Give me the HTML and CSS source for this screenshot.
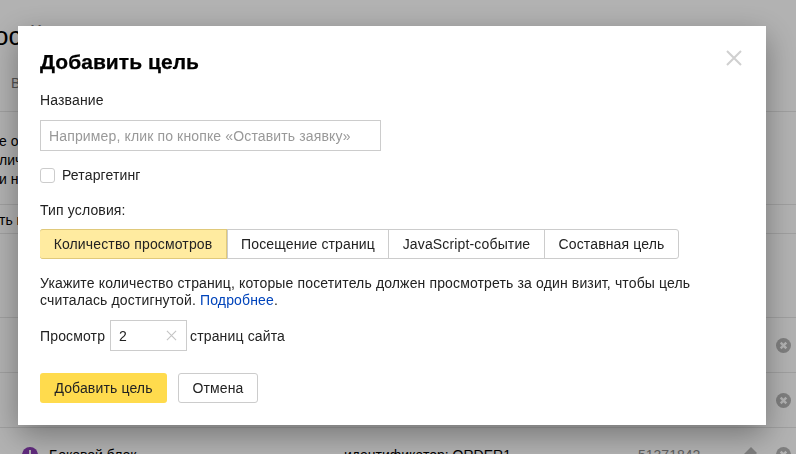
FILE: index.html
```html
<!DOCTYPE html>
<html lang="ru">
<head>
<meta charset="utf-8">
<title>Добавить цель</title>
<link rel="stylesheet" href="styles.css">
</head>
<body>
<div class="page">
  <div class="page-head">
    <div class="page-title">ос й</div>
    <div class="page-tab">В</div>
  </div>
  <div class="page-note">
    <div>е описание</div>
    <div>личество</div>
    <div>и не</div>
  </div>
  <div class="page-action">ть цель</div>
  <div class="page-gap"></div>
  <div class="goal-row"><span class="row-end"><svg class="x-circle" viewBox="0 0 16 16"><circle cx="8" cy="8" r="8"/><path d="M5 5l6 6M11 5l-6 6"/></svg></span></div>
  <div class="goal-row"><span class="row-end"><svg class="x-circle" viewBox="0 0 16 16"><circle cx="8" cy="8" r="8"/><path d="M5 5l6 6M11 5l-6 6"/></svg></span></div>
  <div class="goal-row goal-row-last">
    <svg class="goal-mark" viewBox="0 0 16 16"><circle cx="8" cy="8" r="8"/><rect x="7" y="3" width="2" height="6" fill="#fff"/></svg>
    <span class="goal-name">Боковой блок</span>
    <span class="goal-cond">идентификатор: ORDER1</span>
    <span class="goal-id">51371842</span>
    <svg class="pencil" viewBox="0 0 16 16"><path d="M8 0l6 6-8 8H0V8z"/></svg>
    <svg class="x-circle" viewBox="0 0 16 16"><circle cx="8" cy="8" r="8"/><path d="M5 5l6 6M11 5l-6 6"/></svg>
  </div>
</div>
<div class="overlay">
  <div class="modal">
    <svg class="modal-close" viewBox="0 0 16 16"><path d="M1 1l14 14M15 1L1 15"/></svg>
    <h1 class="modal-title">Добавить цель</h1>
    <div class="label">Название</div>
    <div class="input input-name">Например, клик по кнопке «Оставить заявку»</div>
    <div class="check-row"><span class="checkbox"></span><span>Ретаргетинг</span></div>
    <div class="label label-type">Тип условия:</div>
    <div class="tabs">
      <span class="tab tab-active">Количество просмотров</span>
      <span class="tab">Посещение страниц</span>
      <span class="tab">JavaScript-событие</span>
      <span class="tab">Составная цель</span>
    </div>
    <p class="hint">Укажите количество страниц, которые посетитель должен просмотреть за один визит, чтобы цель считалась достигнутой. <a class="link" href="#">Подробнее</a>.</p>
    <div class="views">
      <span>Просмотр</span>
      <span class="input input-num"><span>2</span><svg class="num-clear" viewBox="0 0 12 12"><path d="M1 1l10 10M11 1L1 11"/></svg></span>
      <span>страниц сайта</span>
    </div>
    <div class="actions">
      <span class="btn btn-primary">Добавить цель</span>
      <span class="btn btn-plain">Отмена</span>
    </div>
  </div>
</div>
</body>
</html>
```
FILE: styles.css
```css
* { box-sizing: border-box; }
html, body { margin: 0; height: 100%; overflow: hidden; }
body { font-family: "Liberation Sans", Arial, sans-serif; font-size: 14px; color: #000; background: #fff; }

.page { height: 454px; overflow: hidden; }
.page-head { height: 112px; border-bottom: 1px solid #e5e5e5; overflow: hidden; }
.page-title { font-size: 26px; line-height: 30px; margin: 21px 0 0 -6px; white-space: nowrap; }
.page-tab { font-size: 14px; line-height: 16px; margin: 24px 0 0 11px; color: #777; }
.page-note { height: 93px; padding-top: 20px; border-bottom: 1px solid #e5e5e5; line-height: 19px; margin-left: -1px; white-space: nowrap; }
.page-action { height: 29px; line-height: 30px; border-bottom: 1px solid #e5e5e5; margin-left: -1px; white-space: nowrap; }
.page-gap { height: 84px; border-bottom: 1px solid #e5e5e5; }
.goal-row { height: 55px; border-bottom: 1px solid #e5e5e5; display: flex; align-items: center; position: relative; }
.goal-row-last { align-items: flex-start; border-bottom: 0; padding-top: 19px; }
.row-end { margin-left: auto; margin-right: 5px; display: flex; }
.x-circle { width: 15px; height: 15px; flex: none; }
.x-circle circle { fill: #b6b6b6; }
.x-circle path { stroke: #fff; stroke-width: 2.6; fill: none; }
.goal-mark { width: 16px; height: 16px; margin-left: 22px; fill: #8a3db4; flex: none; }
.goal-name { margin-left: 11px; width: 295px; flex: none; line-height: 16px; }
.goal-cond { width: 294px; flex: none; line-height: 16px; }
.goal-id { width: 105px; flex: none; color: #888; line-height: 16px; }
.pencil { width: 16px; height: 16px; fill: #b6b6b6; flex: none; margin-right: 17px; }

.overlay { position: fixed; inset: 0; background: rgba(0, 0, 0, .3); padding: 26px 0 0 18px; }
.modal { position: relative; width: 748px; height: 399px; background: #fff; padding: 22px; box-shadow: 0 10px 30px rgba(0, 0, 0, .35); color: #222; font-size: 14px; letter-spacing: .14px; }
.modal-close { position: absolute; top: 24px; right: 24px; width: 16px; height: 16px; fill: none; stroke: #d0d0d0; stroke-width: 2; }
.modal-title { margin: 0; font-size: 21px; line-height: 28px; font-weight: 700; color: #000; letter-spacing: .05px; -webkit-text-stroke: .25px #000; }
.label { line-height: 16px; margin-top: 16px; }
.input { display: flex; align-items: center; background: #fff; border: 1px solid #ccc; }
.input-name { width: 341px; height: 31px; margin-top: 12px; padding-left: 8px; color: #999; }
.check-row { display: flex; align-items: center; gap: 7px; margin-top: 16px; line-height: 16px; }
.checkbox { width: 15px; height: 15px; border: 1px solid #ccc; border-radius: 3px; background: #fff; }
.label-type { margin-top: 19px; }
.tabs { display: grid; grid-template-columns: 186px 161px 156px 134px; width: 639px; height: 30px; margin-top: 11px; border: 1px solid #ccc; border-radius: 3px; }
.tab { display: flex; align-items: center; justify-content: center; border-left: 1px solid #ccc; }
.tab:first-child { border-left: 0; }
.tab-active { background: #ffeba0; margin: -1px 0 -1px -1px; border: 1px solid #e0c97a; border-radius: 3px 0 0 3px; }
.hint { margin: 16px 0 0; line-height: 17px; width: 680px; }
.link { color: #04b; text-decoration: none; }
.views { display: flex; align-items: center; margin-top: 11px; }
.input-num { width: 77px; height: 31px; margin: 0 3px 0 5px; padding: 0 9px 0 8px; justify-content: space-between; }
.num-clear { width: 11px; height: 11px; fill: none; stroke: #c4c4c4; stroke-width: 1.2; }
.actions { display: flex; gap: 11px; margin-top: 22px; }
.btn { display: flex; align-items: center; justify-content: center; height: 30px; border-radius: 3px; }
.btn-primary { width: 127px; background: #ffdb4d; }
.btn-plain { width: 80px; border: 1px solid #ccc; }
```
